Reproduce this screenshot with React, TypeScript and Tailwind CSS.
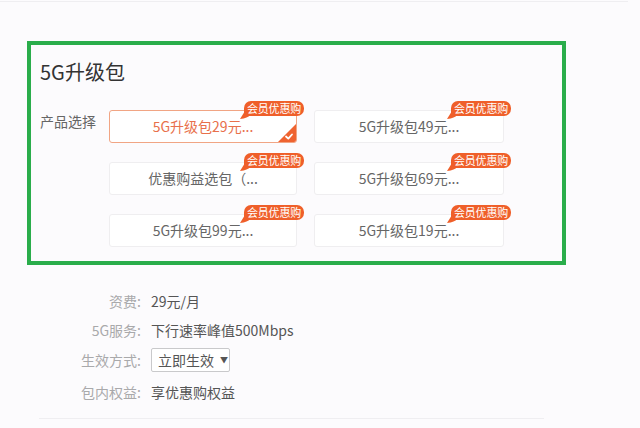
import React from "react";

const FONT = { fontFamily: '"Microsoft YaHei", "Noto Sans CJK SC", "Noto Sans", sans-serif' };

function Badge() {
  return (
    <div className="absolute top-[-10px] right-[-8px] w-[60px] h-[15px]">
      <svg className="absolute left-[-4px] bottom-[-3px]" width="10" height="8" viewBox="0 0 10 8">
        <path d="M0 8 L5 0 L10 0 L10 4 Q8 7 0 8 Z" fill="#ef5f2a" />
      </svg>
      <div className="relative w-full h-full bg-[#ef5f2a] rounded-[7px] rounded-bl-[1px] flex items-center justify-center text-white text-[11px] leading-[15px] tracking-[-0.2px] whitespace-nowrap">
        会员优惠购
      </div>
    </div>
  );
}

function Card({ label, selected }: { label: string; selected?: boolean }) {
  return (
    <div
      className={
        selected
          ? "relative h-[33px] rounded-[3px] border border-[#f1a584] bg-white flex items-center justify-center text-[14px] text-[#e8704b] whitespace-nowrap"
          : "relative h-[33px] rounded-[3px] border border-[#efeef0] bg-white flex items-center justify-center text-[14px] text-[#666666] whitespace-nowrap"
      }
    >
      {label}
      <Badge />
      {selected && (
        <svg className="absolute right-0 bottom-0" width="18" height="18" viewBox="0 0 18 18">
          <path d="M18 0 L18 16 Q18 18 16 18 L0 18 Z" fill="#ef6330" />
          <path d="M8 12.5 L10.3 14.6 L14 10.5" stroke="#ffffff" strokeWidth="1.8" fill="none" strokeLinecap="round" strokeLinejoin="round" />
        </svg>
      )}
    </div>
  );
}

function Row({ label, children }: { label: string; children: React.ReactNode }) {
  return (
    <div className="flex items-center">
      <div className="w-[96px] pr-[10px] text-right text-[14px] text-[#a9a9ab] whitespace-nowrap">{label}</div>
      <div className="text-[14px] text-[#555555] whitespace-nowrap">{children}</div>
    </div>
  );
}

export default function App() {
  return (
    <div className="w-[640px] h-[428px] bg-[#fcfbfd] overflow-hidden flex flex-col" style={FONT}>
      <div className="h-px mt-px bg-[#efeef1] w-[628px]" />
      <div className="ml-[27px] mt-[39px] w-[539px] h-[224px] border-4 border-[#2aad4b] flex flex-col pl-[9px]">
        <div className="mt-[13px] h-[28px] text-[20px] leading-[28px] text-[#333333]">5G升级包</div>
        <div className="mt-[24px] flex">
          <div className="w-[69px] text-[14px] leading-[20px] mt-[1px] text-[#666666]">产品选择</div>
          <div className="grid grid-cols-[188px_190px] gap-x-[17px] gap-y-[19px]">
            <Card label="5G升级包29元..." selected />
            <Card label="5G升级包49元..." />
            <Card label="优惠购益选包（..." />
            <Card label="5G升级包69元..." />
            <Card label="5G升级包99元..." />
            <Card label="5G升级包19元..." />
          </div>
        </div>
      </div>
      <div className="ml-[55px] mt-[26px] flex flex-col leading-[20px]">
        <Row label="资费:">29元/月</Row>
        <div className="h-[9px]" />
        <Row label="5G服务:">下行速率峰值500Mbps</Row>
        <div className="h-[8px]" />
        <Row label="生效方式:">
          <div className="h-[24px] w-[79px] border border-[#c9c9cb] rounded-[2px] bg-white flex items-center pl-[6px] text-[14px] text-[#555555] whitespace-nowrap">
            立即生效
            <span className="ml-[6px] text-[8px] text-[#555555]">▼</span>
          </div>
        </Row>
        <div className="h-[10px]" />
        <Row label="包内权益:">享优惠购权益</Row>
      </div>
      <div className="ml-[39px] mt-[16px] h-px w-[505px] bg-[#efeef1]" />
    </div>
  );
}
